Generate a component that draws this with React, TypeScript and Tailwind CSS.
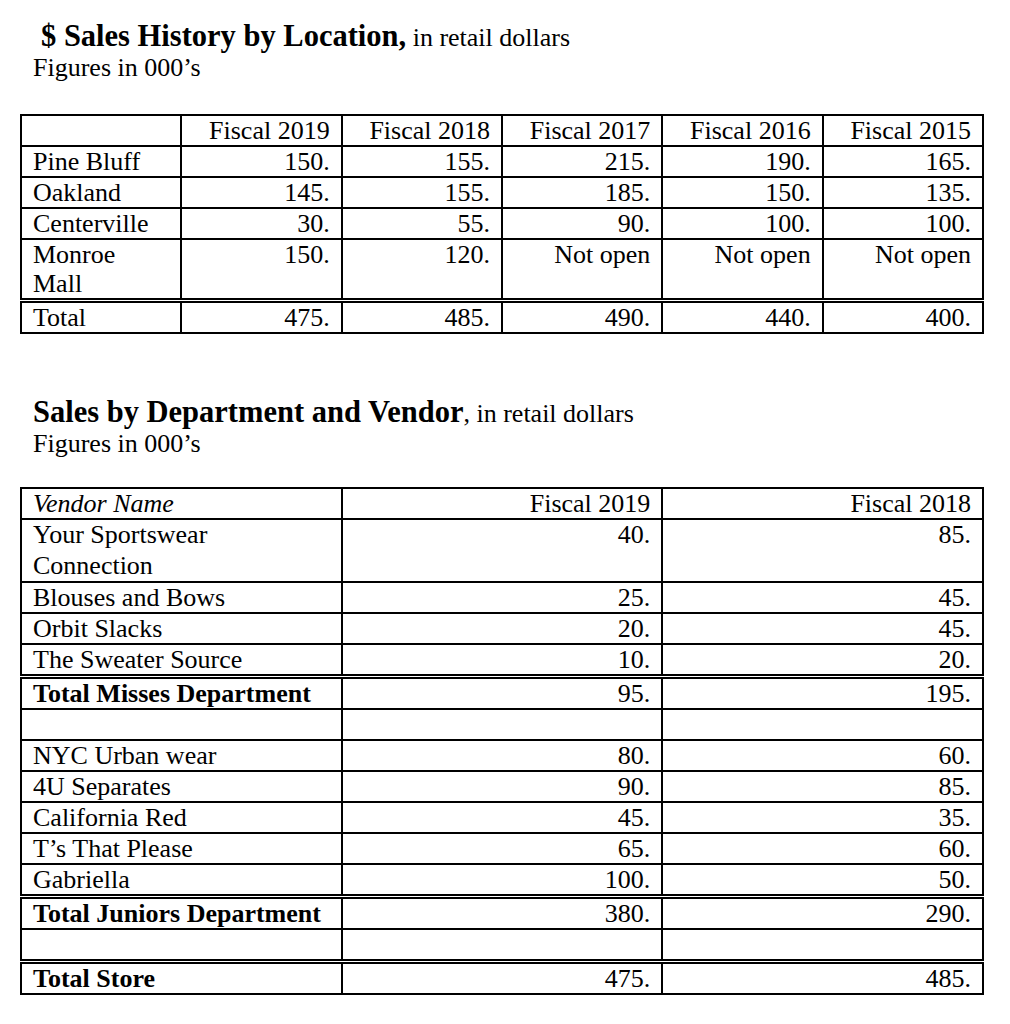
import { ReactNode } from "react";

interface ILocationRow {
  name: ReactNode;
  values: string[];
  double?: boolean;
}

interface IVendorRow {
  name: ReactNode;
  fy19: string;
  fy18: string;
  bold?: boolean;
  double?: boolean;
  tall?: boolean;
}

const years = ["Fiscal 2019", "Fiscal 2018", "Fiscal 2017", "Fiscal 2016", "Fiscal 2015"];

const locations: ILocationRow[] = [
  { name: "Pine Bluff", values: ["150.", "155.", "215.", "190.", "165."] },
  { name: "Oakland", values: ["145.", "155.", "185.", "150.", "135."] },
  { name: "Centerville", values: ["30.", "55.", "90.", "100.", "100."] },
  {
    name: (
      <>
        Monroe
        <br />
        Mall
      </>
    ),
    values: ["150.", "120.", "Not open", "Not open", "Not open"],
  },
  { name: "Total", values: ["475.", "485.", "490.", "440.", "400."], double: true },
];

const vendors: IVendorRow[] = [
  {
    name: (
      <>
        Your Sportswear
        <br />
        Connection
      </>
    ),
    fy19: "40.",
    fy18: "85.",
    tall: true,
  },
  { name: "Blouses and Bows", fy19: "25.", fy18: "45." },
  { name: "Orbit Slacks", fy19: "20.", fy18: "45." },
  { name: "The Sweater Source", fy19: "10.", fy18: "20." },
  { name: "Total Misses Department", fy19: "95.", fy18: "195.", bold: true, double: true },
  { name: "\u00a0", fy19: "", fy18: "" },
  { name: "NYC Urban wear", fy19: "80.", fy18: "60." },
  { name: "4U Separates", fy19: "90.", fy18: "85." },
  { name: "California Red", fy19: "45.", fy18: "35." },
  { name: "T\u2019s That Please", fy19: "65.", fy18: "60." },
  { name: "Gabriella", fy19: "100.", fy18: "50." },
  { name: "Total Juniors Department", fy19: "380.", fy18: "290.", bold: true, double: true },
  { name: "\u00a0", fy19: "", fy18: "" },
  { name: "Total Store", fy19: "475.", fy18: "485.", bold: true, double: true },
];

const cell = "border-2 border-black px-[11px] py-0 align-top";
const dbl = "border-t-[5px] [border-top-style:double]";

function Heading({ title, rest, lead }: { title: string; rest: string; lead?: boolean }) {
  return (
    <div className="pl-[13px] text-[26px] leading-[30px]">
      <div className={lead ? "pl-2" : ""}>
        <span className="font-bold text-[30.5px] leading-[30px]">{title}</span>
        <span className="leading-[30px]">{rest}</span>
      </div>
      <div>Figures in 000&rsquo;s</div>
    </div>
  );
}

export default function App() {
  return (
    <div className="min-h-screen bg-white text-black font-['Liberation_Serif','Times_New_Roman',serif] pl-[20px] pt-[21px] pb-10">
      <Heading title="$ Sales History by Location," rest=" in retail dollars" lead />

      <table className="mt-[31px] w-[964px] table-fixed border-collapse text-[26px] leading-[29px]">
        <thead>
          <tr>
            <th className={cell}>&nbsp;</th>
            {years.map((y) => (
              <th key={y} className={`${cell} text-right font-normal`}>
                {y}
              </th>
            ))}
          </tr>
        </thead>
        <tbody>
          {locations.map((row, i) => (
            <tr key={i}>
              <td className={`${cell} text-left ${row.double ? dbl : ""}`}>{row.name}</td>
              {row.values.map((v, j) => (
                <td key={j} className={`${cell} text-right ${row.double ? dbl : ""}`}>
                  {v}
                </td>
              ))}
            </tr>
          ))}
        </tbody>
      </table>

      <div className="mt-[63px]">
        <Heading title="Sales by Department and Vendor" rest=", in retail dollars" />
      </div>

      <table className="mt-[28px] w-[964px] table-fixed border-collapse text-[26px] leading-[29px]">
        <thead>
          <tr>
            <th className={`${cell} text-left font-normal italic`}>Vendor Name</th>
            <th className={`${cell} text-right font-normal`}>Fiscal 2019</th>
            <th className={`${cell} text-right font-normal`}>Fiscal 2018</th>
          </tr>
        </thead>
        <tbody>
          {vendors.map((row, i) => (
            <tr key={i} className={row.bold ? "font-bold" : ""}>
              <td
                className={`${cell} text-left ${row.tall ? "leading-[30.5px]" : ""} ${
                  row.double ? dbl : ""
                }`}
              >
                {row.name}
              </td>
              <td className={`${cell} text-right font-normal ${row.double ? dbl : ""}`}>{row.fy19}</td>
              <td className={`${cell} text-right font-normal ${row.double ? dbl : ""}`}>{row.fy18}</td>
            </tr>
          ))}
        </tbody>
      </table>
    </div>
  );
}
